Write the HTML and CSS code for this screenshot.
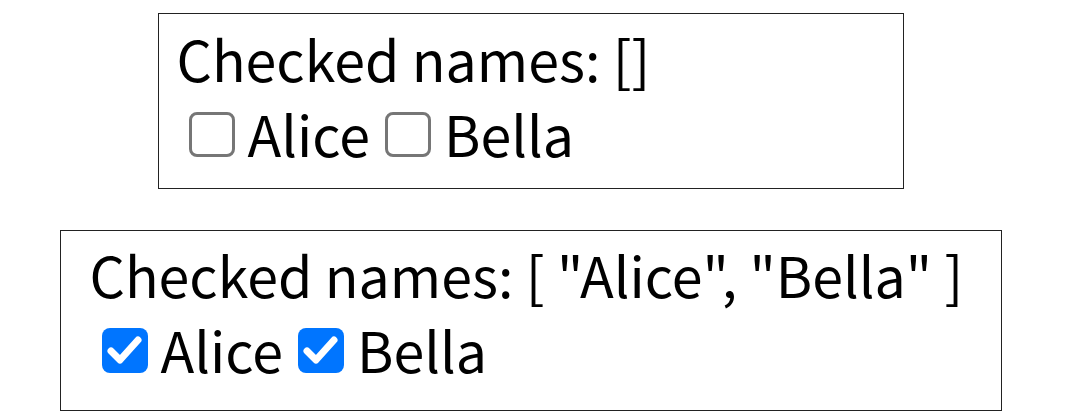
FILE: index.html
```html
<!DOCTYPE html>
<html>
<head>
<meta charset="utf-8">
<link rel="stylesheet" href="styles.css">
</head>
<body>
<div class="page">
  <div class="card card-empty">
    <div class="status">Checked names: []</div>
    <div class="options">
      <label class="option"><input type="checkbox" class="cb">Alice</label>
      <label class="option"><input type="checkbox" class="cb">Bella</label>
    </div>
  </div>
  <div class="card card-full">
    <div class="status">Checked names: [ "Alice", "Bella" ]</div>
    <div class="options">
      <label class="option"><input type="checkbox" class="cb" checked>Alice</label>
      <label class="option"><input type="checkbox" class="cb" checked>Bella</label>
    </div>
  </div>
</div>
</body>
</html>
```
FILE: styles.css
```css
html, body {
  margin: 0;
  padding: 0;
  background: #ffffff;
}
.page {
  display: flex;
  flex-direction: column;
  align-items: center;
  padding-top: 13px;
  padding-right: 5px;
  gap: 41px;
  font-family: "Noto Sans CJK KR", "Noto Sans", sans-serif;
  font-size: 55.5px;
  color: #000;
}
.card {
  box-sizing: border-box;
  border: 1.5px solid #222;
  display: flex;
  flex-direction: column;
}
.card-empty {
  width: 746px;
  height: 176px;
  padding: 7px 18px;
}
.card-full {
  width: 942px;
  height: 181px;
  padding: 6px 29px;
}
.status {
  line-height: 75px;
  white-space: nowrap;
}
.options {
  display: flex;
  align-items: baseline;
  line-height: 75px;
  padding-left: 12px;
  gap: 15px;
}
.option {
  display: flex;
  align-items: baseline;
  gap: 13px;
}
.cb {
  appearance: none;
  -webkit-appearance: none;
  margin: 0;
  width: 46px;
  height: 45px;
  box-sizing: border-box;
  border: 3px solid #767676;
  border-radius: 8px;
  background: #fff;
}
.cb:checked {
  border: none;
  background-color: #0075ff;
  background-image: url("data:image/svg+xml,%3Csvg xmlns='http://www.w3.org/2000/svg' viewBox='0 0 46 45'%3E%3Cpath d='M9 23 L18 32 L36 12' fill='none' stroke='white' stroke-width='7' stroke-linecap='round' stroke-linejoin='round'/%3E%3C/svg%3E");
  background-size: 100% 100%;
}
```
